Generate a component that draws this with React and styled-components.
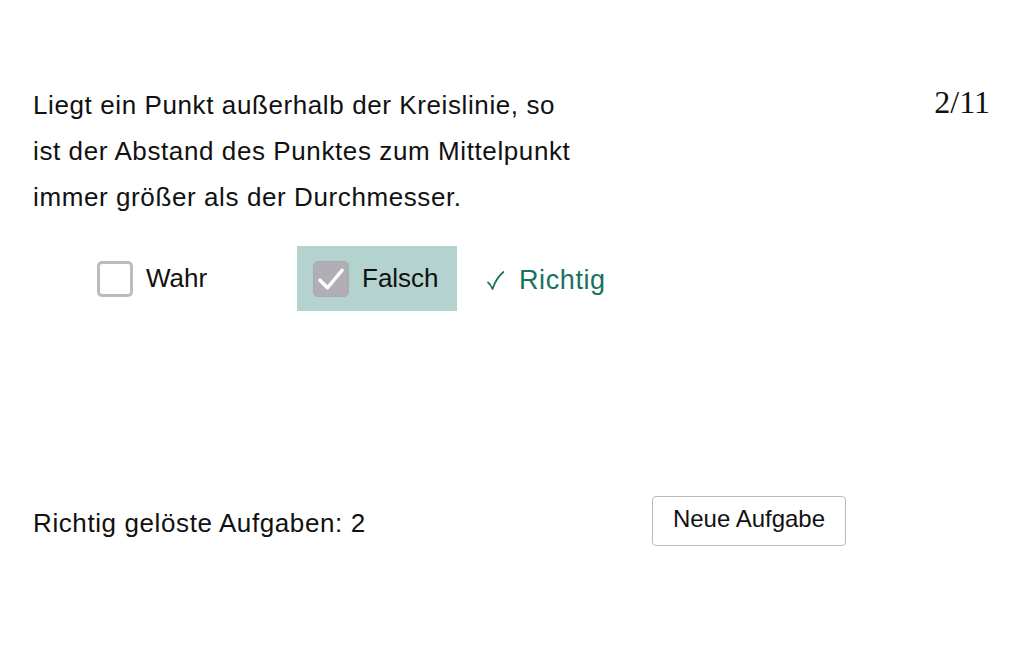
import React from "react";
import styled, { createGlobalStyle } from "styled-components";

const Global = createGlobalStyle`
  html, body { margin: 0; padding: 0; background: #fff; }
  body { font-family: "Liberation Sans", Arial, sans-serif; color: #111; }
`;

const Page = styled.div`
  width: 1032px;
  height: 645px;
  box-sizing: border-box;
  padding: 82px 42px 0 33px;
  display: flex;
  flex-direction: column;
`;

const Header = styled.div`
  display: flex;
  justify-content: space-between;
  align-items: flex-start;
`;

const Question = styled.p`
  margin: 0;
  font-size: 26px;
  line-height: 46px;
  letter-spacing: 0.6px;
`;

const Counter = styled.div`
  font-family: "Liberation Serif", "Times New Roman", serif;
  font-size: 32px;
  line-height: 40px;
`;

const Options = styled.div`
  display: flex;
  align-items: center;
  margin-top: 26px;
  padding-left: 48px;
`;

const Option = styled.label`
  display: flex;
  align-items: center;
  box-sizing: border-box;
  width: 160px;
  height: 65px;
  padding: 0 16px;
  gap: 13px;
  margin-right: ${(p) => p.$gap || 0}px;
  background: ${(p) => (p.$selected ? "#b4d3ce" : "transparent")};
  font-size: 26px;
`;

const Box = styled.span`
  flex: none;
  width: 36px;
  height: 36px;
  box-sizing: border-box;
  border-radius: 5px;
  border: ${(p) => (p.$checked ? "1px solid #aaa9ae" : "3px solid #bcbcbc")};
  background: ${(p) => (p.$checked ? "#b1afb5" : "#fff")};
  display: flex;
  align-items: center;
  justify-content: center;
`;

const Result = styled.div`
  margin-left: 30px;
  color: #17725f;
  font-size: 27px;
  letter-spacing: 0.6px;
  display: flex;
  align-items: center;
  gap: 15px;
  padding-top: 4px;
`;

const Footer = styled.div`
  display: flex;
  align-items: center;
  margin-top: 185px;
`;

const Score = styled.div`
  width: 619px;
  font-size: 26px;
  letter-spacing: 0.6px;
  padding-top: 4px;
`;

const Button = styled.button`
  font-family: "Liberation Sans", Arial, sans-serif;
  font-size: 24px;
  color: #111;
  background: #fff;
  border: 1px solid #b9b9b9;
  border-radius: 4px;
  width: 194px;
  height: 50px;
  padding: 0 0 4px;
`;

const Check = ({ color = "#fff", size = 24, w = 3 }) => (
  <svg width={size} height={size} viewBox="0 0 24 24" fill="none">
    <path d="M2.5 13 L9 19.5 L21.5 4.5" stroke={color} strokeWidth={w} strokeLinecap="round" strokeLinejoin="round" />
  </svg>
);

const Tick = () => (
  <svg width="17" height="19" viewBox="0 0 17 19" fill="none">
    <path d="M1 11.5 C2.5 12.5 4 14.5 5.5 18 C8 10.5 11.5 5 16.5 1" stroke="#17725f" strokeWidth="1.8" strokeLinecap="round" strokeLinejoin="round" />
  </svg>
);

export default function App() {
  return (
    <>
      <Global />
      <Page>
        <Header>
          <Question>
            Liegt ein Punkt außerhalb der Kreislinie, so
            <br />
            ist der Abstand des Punktes zum Mittelpunkt
            <br />
            immer größer als der Durchmesser.
          </Question>
          <Counter>2/11</Counter>
        </Header>
        <Options>
          <Option $gap={56}>
            <Box />
            <span>Wahr</span>
          </Option>
          <Option $selected>
            <Box $checked>
              <Check size={28} />
            </Box>
            <span>Falsch</span>
          </Option>
          <Result>
            <Tick />
            <span>Richtig</span>
          </Result>
        </Options>
        <Footer>
          <Score>Richtig gelöste Aufgaben: 2</Score>
          <Button>Neue Aufgabe</Button>
        </Footer>
      </Page>
    </>
  );
}
